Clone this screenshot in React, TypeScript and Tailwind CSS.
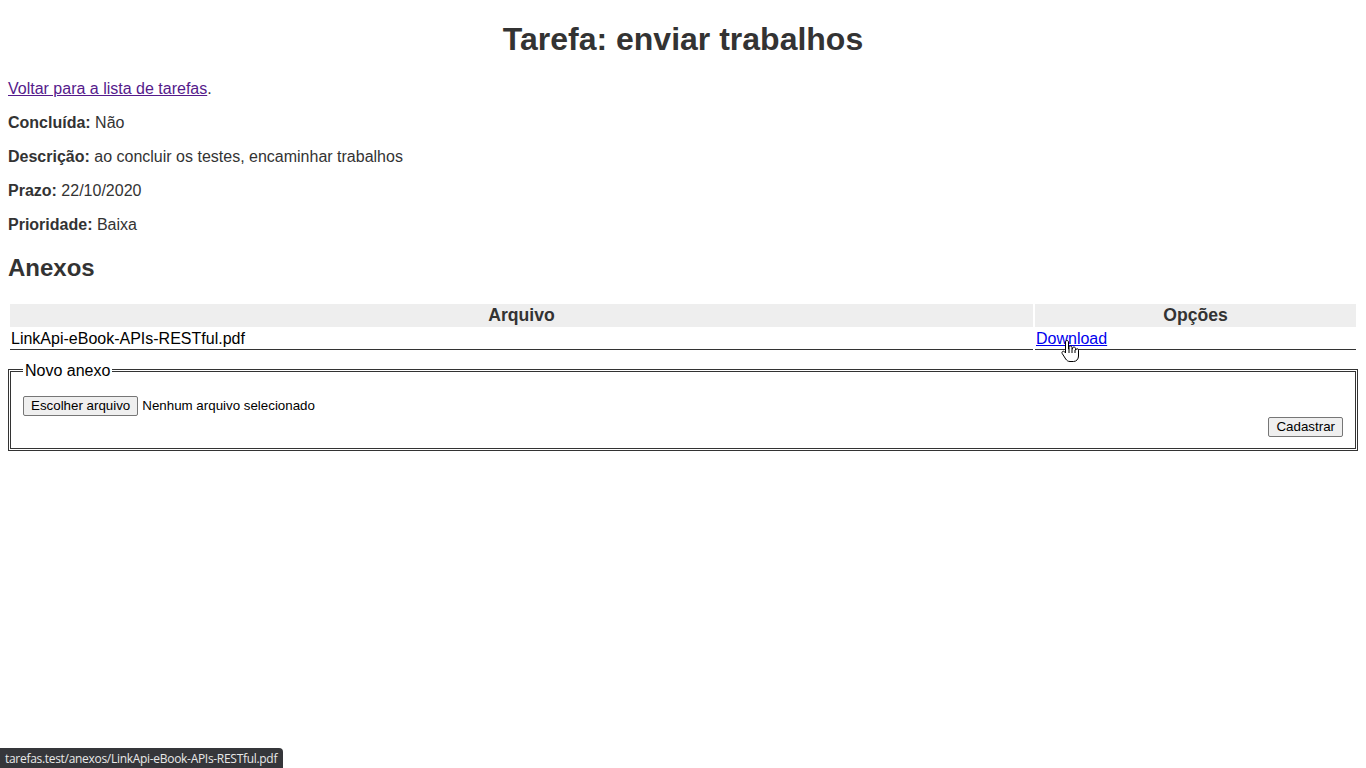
import React from "react";

function HandCursor() {
  return (
    <svg width="18" height="24" viewBox="0 0 18 24" className="absolute left-[26px] top-[10px] pointer-events-none">
      <path
        d="M6 1.5c.8 0 1.5.7 1.5 1.5v7h.5V8.5c0-.8.7-1.5 1.5-1.5s1.5.7 1.5 1.5V10h.5V9.5c0-.8.7-1.5 1.5-1.5s1.5.7 1.5 1.5V11h.3c0-.8.7-1.3 1.4-1.3.8 0 1.3.6 1.3 1.4V17c0 3-2 5.5-5 5.5H9c-2 0-3.2-1-4.3-2.5L1.2 14.5c-.5-.8-.2-1.7.5-2.1.7-.4 1.5-.2 2 .5L4.5 14V3c0-.8.7-1.5 1.5-1.5z"
        fill="white"
        stroke="black"
        strokeWidth="1"
      />
      <path d="M8 10v4M11 10v4M14 11v3" stroke="black" strokeWidth="1" fill="none" />
    </svg>
  );
}

export default function App() {
  return (
    <div className="relative min-h-[768px] bg-white px-2 font-['Liberation_Sans',Arial,sans-serif] text-[16px] leading-[normal] text-[#333]">
      <h1 className="pt-[21.44px] mb-[21.44px] text-center text-[32px] font-bold leading-[normal]">
        Tarefa: enviar trabalhos
      </h1>
      <p className="my-4">
        <a href="#" className="text-[#551a8b] underline">
          Voltar para a lista de tarefas
        </a>
        .
      </p>
      <p className="my-4">
        <b>Concluída:</b> Não
      </p>
      <p className="my-4">
        <b>Descrição:</b> ao concluir os testes, encaminhar trabalhos
      </p>
      <p className="my-4">
        <b>Prazo:</b> 22/10/2020
      </p>
      <p className="my-4">
        <b>Prioridade:</b> Baixa
      </p>
      <h2 className="mt-[19.92px] mb-[19.92px] text-[24px] font-bold leading-[normal]">Anexos</h2>
      <table className="w-full table-fixed border-separate border-spacing-[2px]">
        <colgroup>
          <col className="w-[1023px]" />
          <col />
        </colgroup>
        <thead>
          <tr>
            <th className="bg-[#eeeeee] py-[1px] text-center text-[17.6px] font-bold leading-[normal]">Arquivo</th>
            <th className="bg-[#eeeeee] py-[1px] text-center text-[17.6px] font-bold leading-[normal]">Opções</th>
          </tr>
        </thead>
        <tbody>
          <tr>
            <td className="border-b border-[#333] px-[1px] pt-[1px] pb-[1px] text-black">LinkApi-eBook-APIs-RESTful.pdf</td>
            <td className="relative border-b border-[#333] px-[1px] pt-[1px] pb-[1px]">
              <a href="#" className="text-[#0000ee] underline">
                Download
              </a>
              <HandCursor />
            </td>
          </tr>
        </tbody>
      </table>
      <form className="mt-[10px]">
        <fieldset className="border-[3px] border-double border-[#333] px-3 pb-[11px] pt-0">
          <legend className="px-[2px] text-black">Novo anexo</legend>
          <div className="mt-[16px] flex items-center text-[13.33px] text-black">
            <span className="inline-block rounded-[2px] border border-[#767676] bg-[#efefef] px-[7px] py-[1px] leading-[16px]">
              Escolher arquivo
            </span>
            <span className="ml-[4px]">Nenhum arquivo selecionado</span>
          </div>
          <div className="mt-[1px] flex justify-end">
            <button
              type="button"
              className="rounded-[2px] border border-[#767676] bg-[#efefef] px-[7px] py-[1px] text-[13.33px] leading-[16px] text-black"
            >
              Cadastrar
            </button>
          </div>
        </fieldset>
      </form>
      <div className="absolute bottom-0 left-0 flex h-[20px] items-center whitespace-nowrap rounded-tr-[4px] bg-[#35363a] pl-[5px] pr-[6px] font-['Open_Sans','Noto_Sans',sans-serif] text-[12px] leading-[normal] tracking-[-0.3px] text-[#e8e8e8]">
        tarefas.test/anexos/LinkApi-eBook-APIs-RESTful.pdf
      </div>
    </div>
  );
}
